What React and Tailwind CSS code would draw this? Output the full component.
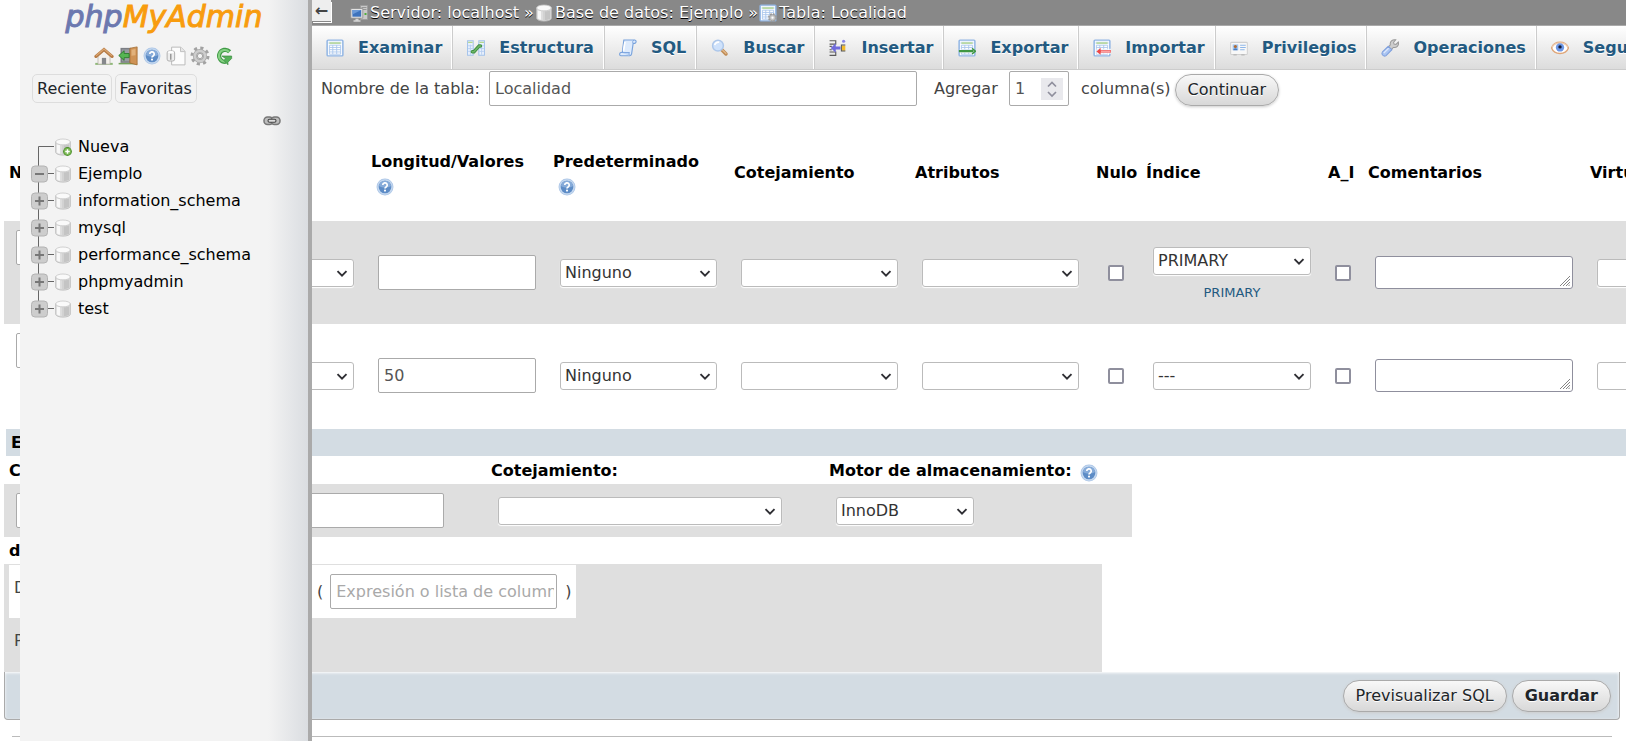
import React from "react";

const svgBase = "block shrink-0";

function Icon({ children, className = "size-[18px]" }) {
  return (
    <svg viewBox="0 0 16 16" className={`${svgBase} ${className}`} aria-hidden="true">
      {children}
    </svg>
  );
}

function HomeIcon() {
  return (
    <Icon className="size-5">
      <path d="M1 13.5h14v1.6H1z" fill="#8fb878" />
      <path d="M3.2 8 8 3.8 12.8 8v6.5H3.2z" fill="#f4f1ec" stroke="#b5b0a8" strokeWidth=".6" />
      <path d="M6.3 9.5h3.4v5.2H6.3z" fill="#85878b" />
      <path d="M1.5 8.4 8 2.8l6.5 5.6" fill="none" stroke="#b87c45" strokeWidth="2.4" strokeLinecap="round" />
      <path d="M1.6 7.9 8 2.4l6.4 5.5" fill="none" stroke="#dba772" strokeWidth="1" />
    </Icon>
  );
}

function LogoutIcon() {
  return (
    <Icon className="size-5">
      <path d="M2 1.5h8.5v12H2z" fill="#7b7e84" />
      <path d="M3.2 2.7h6v9.6h-6z" fill="#989ca1" />
      <path d="M.5 13.5h14.8v1.2H.5z" fill="#74a25a" />
      <path d="M9.5 1.8 15.3.7v14.4L9.5 13.6z" fill="#cf9356" stroke="#a0692f" strokeWidth=".6" />
      <path d="m10.8 3 3.2-.6v5l-3.2.3z" fill="#e2b27c" />
      <path d="M.6 7.6 4.9 3.8V6h4v3.3h-4v2.2z" fill="#55b552" stroke="#2c7a2d" strokeWidth=".7" />
    </Icon>
  );
}

function HelpIcon() {
  return (
    <Icon>
      <circle cx="8" cy="8" r="7.5" fill="#a9c4e6" />
      <circle cx="8" cy="8" r="6.9" fill="#c5d8ef" />
      <circle cx="8" cy="8" r="5.6" fill="#5d8cc6" />
      <path d="M2.6 7a5.5 5.5 0 0 1 10.8 0c-3 1.8-7.5 1.8-10.8 0z" fill="#86abd9" />
      <path d="M6 6.300a2 2 0 1 1 3 1.700c-.7.4-1 .7-1 1.400" fill="none" stroke="#fff" strokeWidth="1.5" />
      <circle cx="8" cy="11.2" r=".95" fill="#fff" />
    </Icon>
  );
}

function DocsIcon() {
  return (
    <Icon className="size-5">
      <path d="M4.5.9h7.300l3.400 3.400v10.800H4.500z" fill="#fcfcfc" stroke="#bcbcbc" strokeWidth=".8" />
      <path d="M11.600 1v3.500h3.500" fill="#e6e6e6" stroke="#bcbcbc" strokeWidth=".7" />
      <rect x=".9" y="4" width="6" height="8" rx="1.5" fill="#ededed" stroke="#b0b0b0" strokeWidth=".8" />
      <path d="M3.800 6.200v4.800" stroke="#9a9a9a" strokeWidth="1.2" />
      <ellipse cx="3.9" cy="4.9" rx="2.5" ry=".9" fill="#fff" />
    </Icon>
  );
}

function GearIcon() {
  return (
    <Icon className="size-5">
      <circle cx="8" cy="8" r="6.4" fill="none" stroke="#a2a2a2" strokeWidth="2.4" strokeDasharray="2.5 2.53" />
      <circle cx="8" cy="8" r="4" fill="none" stroke="#a8a8a8" strokeWidth="3.4" />
      <circle cx="8" cy="8" r="4.1" fill="none" stroke="#cdcdcd" strokeWidth="2" />
      <circle cx="8" cy="8" r="2.1" fill="#f3f3f3" stroke="#999" strokeWidth=".7" />
    </Icon>
  );
}

function ReloadIcon() {
  return (
    <Icon>
      <path d="M13 4.2A5.400 5.400 0 1 0 9.500 13.300" fill="none" stroke="#3f9a45" strokeWidth="3.8" />
      <path d="M12.600 4.400A5.200 5.200 0 1 0 9 13" fill="none" stroke="#85d083" strokeWidth="1.8" />
      <path d="M6.200 8h8.600v2.200l-3.300 3.300v2.300L7.900 12l1.600-1.600z" fill="#55b158" stroke="#35883b" strokeWidth=".6" />
    </Icon>
  );
}

function LinkIcon() {
  return (
    <svg viewBox="0 0 18 12" className="block h-3 w-[18px]" aria-hidden="true">
      <rect x="1" y="2" width="9" height="7.5" rx="3.5" fill="#bdbdbd" stroke="#777" strokeWidth="1.5" />
      <rect x="8" y="2" width="9" height="7.5" rx="3.5" fill="#bdbdbd" stroke="#777" strokeWidth="1.5" />
      <rect x="5" y="4.3" width="8" height="3" rx="1.5" fill="#ddd" stroke="#444" strokeWidth="1.1" />
    </svg>
  );
}

function Barrel() {
  return (
    <>
      <path d="M1.500 3.300v9.400c0 1.300 2.900 2.500 6.500 2.500s6.500-1.200 6.500-2.500V3.300z" fill="#dedede" stroke="#bcbcbc" strokeWidth=".8" />
      <path d="M2.500 5.500v7.200c.7.800 1.700 1.200 2.800 1.400V6.400z" fill="#f8f8f8" />
      <path d="M8.500 6.500v7.900c2.200 0 4.200-.5 5-1.300V5.500c-1 .6-2.800 1-5 1z" fill="#c4c4c4" />
      <path d="M7 6.500v7.800h1.500V6.500z" fill="#d2d2d2" />
      <ellipse cx="8" cy="3.5" rx="6.5" ry="2.6" fill="#fafafa" stroke="#c6c6c6" strokeWidth=".7" />
    </>
  );
}

function DatabaseIcon({ added = false }) {
  return (
    <Icon>
      <Barrel />
      {added && (
        <>
          <circle cx="12" cy="12" r="3.9" fill="#4b8f2b" />
          <circle cx="12" cy="12" r="3.1" fill="#7cb955" />
          <path d="M12 10v4M10 12h4" stroke="#fff" strokeWidth="1.3" />
        </>
      )}
    </Icon>
  );
}

function ServerIcon() {
  return (
    <svg viewBox="0 0 18 18" className={`${svgBase} mt-[3px] size-[18px]`} aria-hidden="true">
      <path d="M10.500.5h7v14h-7z" fill="#c9c9c9" stroke="#9b9b9b" strokeWidth=".8" />
      <path d="M11.500 2.500h5M11.500 4.500h5" stroke="#888" strokeWidth=".8" />
      <path d="M14.500 9h2" stroke="#4fae3c" strokeWidth="2" />
      <path d="M.8 3.500h12v9.700H.8z" fill="#e3e3e3" stroke="#8c8c8c" strokeWidth=".8" />
      <path d="M2.400 5h8.800v6.700H2.400z" fill="#3e73bd" />
      <path d="M2.400 5h8.800l-8.800 4.500z" fill="#6b9ad8" />
      <path d="M5.500 13.800h3v1.500h2v1.500h-7v-1.500h2z" fill="#d5d5d5" />
    </svg>
  );
}

function SheetShape() {
  return (
    <>
      <rect x="1" y="1" width="14" height="14" rx=".8" fill="#fff" stroke="#8fb4e4" strokeWidth="1.3" />
      <path d="M2.200 2.300h11.600v2.200H2.200z" fill="#d4e4f8" />
      <path d="M3 3.600h10" stroke="#b3d78e" strokeWidth="1.3" />
      <path d="M3 5.500h10v8H3zM3 7.500h10M3 9.500h10M3 11.500h10M6 5.500v8M9.500 5.500v8" fill="none" stroke="#a9c6ec" strokeWidth=".8" />
    </>
  );
}

function BrowseIcon() {
  return (
    <Icon>
      <SheetShape />
    </Icon>
  );
}

function TableGearIcon() {
  return (
    <Icon>
      <SheetShape />
      <circle cx="12" cy="12.2" r="3" fill="#ccc" stroke="#999" strokeWidth="2" strokeDasharray="1.5 .85" />
      <circle cx="12" cy="12.2" r="2.7" fill="#c6c6c6" stroke="#999" strokeWidth=".6" />
      <circle cx="12" cy="12.2" r="1" fill="#fff" />
    </Icon>
  );
}

function StructureIcon() {
  return (
    <Icon>
      <path d="M.5 1.500h5v13h-5zM10.500 1.500h5v13h-5z" fill="#eaf2fd" stroke="#a3c2ea" strokeWidth=".9" />
      <path d="M1 3h4M11 3h4" stroke="#b3d78e" strokeWidth="1.2" />
      <path d="M1 6h4M1 8.500h4M1 11h4M11 6h4M11 8.500h4M11 11h4M3 5v9M13 5v9" stroke="#b5cef0" strokeWidth=".8" />
      <path d="M4.700 11.300h1.500l4.600-5.100h1.200" fill="none" stroke="#3f9143" strokeWidth="3" strokeLinecap="round" />
      <path d="M4.700 11.300h1.500l4.600-5.100h1.200" fill="none" stroke="#6fb567" strokeWidth="1.3" strokeLinecap="round" />
    </Icon>
  );
}

function SqlIcon() {
  return (
    <Icon>
      <path d="M4.300.9h9.500c1.700 0 2 2.300.3 3h-1.500l-1.400 9.300c-.2 1-.8 1.700-1.800 1.700H1.700C.2 14.900.1 12.400 1.700 12h1.200z" fill="#deebfc" stroke="#78a2dc" strokeWidth="1" />
      <path d="M1.700 12h7.600c-.6 1.100-.3 2.300.4 2.800" fill="#bcd5f6" stroke="#78a2dc" strokeWidth=".8" />
      <path d="M12.600 3.900c-1-.8-.4-2.800 1-2.900" fill="none" stroke="#78a2dc" strokeWidth=".8" />
      <path d="m5.300 2.500-1.300 8" stroke="#fff" strokeWidth="1.5" />
    </Icon>
  );
}

function SearchIcon() {
  return (
    <Icon>
      <path d="m9.800 9.800 3.500 3.500" stroke="#c08d57" strokeWidth="3.2" strokeLinecap="round" />
      <path d="m10.300 9.800 3 3" stroke="#e7bf92" strokeWidth="1" strokeLinecap="round" />
      <circle cx="6.2" cy="5.9" r="4.8" fill="#cfe2fb" stroke="#adc7ea" strokeWidth="1.3" />
      <path d="M3.300 5.500a3.300 3.300 0 0 1 4-2.600" fill="none" stroke="#fff" strokeWidth="1.5" />
    </Icon>
  );
}

function InsertIcon() {
  return (
    <Icon>
      <path d="M.5 1.500h5.500v3H.5M.5 11.500h5.500v3H.5M.5 6.500H2.500M.5 9.500H2.500" fill="none" stroke="#5a5a5a" strokeWidth="1" />
      <path d="M1.500 8 6 3.800v2.900h4.200v2.600H6v2.900z" fill="#6f6bdb" />
      <path d="M11.300 5.800h3.200v4.600h-3.200z" fill="#f3ba2a" />
      <path d="M14.500 5.300h-3.500v5.400h3.500" fill="none" stroke="#555" strokeWidth=".9" />
      <circle cx="13" cy="2" r="1.4" fill="#8a86e6" />
    </Icon>
  );
}

function ExportIcon() {
  return (
    <Icon>
      <SheetShape />
      <path d="M1.500 9.200h13v3.200h-13z" fill="#fff" opacity=".7" />
      <path d="M.8 10.800h13" stroke="#3f9742" strokeWidth="2" />
      <path d="m12.500 8.300 3 2.500-3 2.500" fill="none" stroke="#3f9742" strokeWidth="1.3" />
    </Icon>
  );
}

function ImportIcon() {
  return (
    <Icon>
      <SheetShape />
      <path d="M3 8.700h13v4.500H3z" fill="#fff" opacity=".7" />
      <path d="M5.500 11H16" stroke="#f25c5c" strokeWidth="2.2" />
      <path d="M7 11h8.500" stroke="#ffc0c0" strokeWidth=".7" />
      <path d="M3 11l3.800-3v6z" fill="#ee4848" />
    </Icon>
  );
}

function PrivilegesIcon() {
  return (
    <Icon>
      <rect x=".6" y="3" width="14.8" height="10.8" rx=".8" fill="#f8f8f8" stroke="#d0d0d0" strokeWidth=".9" />
      <path d="M2.300 4.800h5v5.200h-5z" fill="#a3c7ef" />
      <circle cx="4.8" cy="6.7" r="1.4" fill="#b06b33" />
      <path d="M2.900 10c0-2.500 3.800-2.500 3.800 0z" fill="#4c7cc0" />
      <path d="M9 5.500h5M9 7.500h5M9 9.500h4" stroke="#8eb6e8" strokeWidth="1" />
      <path d="M3 14h3M10 14h3" stroke="#bcbcbc" strokeWidth="1.2" />
    </Icon>
  );
}

function WrenchIcon() {
  return (
    <Icon>
      <path d="M8.300 5.300c-.7-2.700 1.800-5.200 4.800-4.600l-1.900 2.200.4 1.600 1.700.3 2.100-2.100c.9 3.200-1.700 5.400-4.500 4.800L9.300 9.400 6.600 7z" fill="#cdcdcd" stroke="#9a9a9a" strokeWidth=".9" />
      <path d="m6.500 6.500 3.200 3-5.200 5.200c-2 1.500-4.700-1.100-3.200-3.200z" fill="#a9c4f2" stroke="#7f9fdc" strokeWidth=".9" />
      <path d="m6.800 8.200-4.300 4.300" stroke="#dbe7fc" strokeWidth="1.2" />
    </Icon>
  );
}

function EyeIcon() {
  return (
    <Icon>
      <path d="M.5 8C3 1.300 13 1.300 15.500 8 13 14.500 3 14.500.5 8z" fill="#fff" stroke="#dfa67a" strokeWidth="1.3" />
      <path d="M1 7C4 2.200 12 2.200 15 7" fill="none" stroke="#eccbb0" strokeWidth="1.2" />
      <circle cx="8" cy="7.5" r="3.7" fill="#6d97e6" />
      <circle cx="8" cy="7" r="1.5" fill="#161b33" />
    </Icon>
  );
}

function Select({ label, value = "", className = "w-full" }) {
  return (
    <div className={`relative ${className}`}>
      <select
        aria-label={label}
        defaultValue={value}
        className="block h-7 w-full appearance-none rounded-[3px] border border-[#bbb] bg-white pl-1 pr-6 text-base leading-6 text-[#333] shadow-[0_1px_1px_#fff]"
      >
        <option value={value}>{value}</option>
      </select>
      <svg viewBox="0 0 12 8" className="pointer-events-none absolute right-[6px] top-[11px] h-2 w-3" aria-hidden="true">
        <path d="m1.500 1.200 4.500 4.500 4.500-4.500" fill="none" stroke="#2e2e33" strokeWidth="1.9" />
      </svg>
    </div>
  );
}

const inputClass =
  "block h-[35px] rounded-[2px] border border-[#aaa] bg-white px-[5px] text-base text-[#555] placeholder:text-[#a9a9a9]";

function Checkbox({ label }) {
  return (
    <input
      type="checkbox"
      aria-label={label}
      className="mx-auto block size-4 appearance-none rounded-[2px] border-2 border-[#8f8f9d] bg-white"
    />
  );
}

function CommentBox({ label }) {
  return (
    <div className="relative">
      <textarea
        aria-label={label}
        className="block h-[33px] w-full resize-none overflow-hidden rounded-[3px] border border-[#8f8f9d] bg-white px-1"
      />
      <svg viewBox="0 0 10 10" className="pointer-events-none absolute bottom-[3px] right-[3px] size-[10px]" aria-hidden="true">
        <path d="M0 10 10 0M3 10l7-7M6 10l4-4M8.500 10 10 8.500" stroke="#777" strokeWidth=".9" />
      </svg>
    </div>
  );
}

const tabs = [
  ["Examinar", BrowseIcon],
  ["Estructura", StructureIcon],
  ["SQL", SqlIcon],
  ["Buscar", SearchIcon],
  ["Insertar", InsertIcon],
  ["Exportar", ExportIcon],
  ["Importar", ImportIcon],
  ["Privilegios", PrivilegesIcon],
  ["Operaciones", WrenchIcon],
  ["Seguimiento", EyeIcon],
];

const crumbs = [
  ["Servidor: localhost", ServerIcon],
  ["Base de datos: Ejemplo", DatabaseIcon],
  ["Tabla: Localidad", TableGearIcon],
];

const databases = ["Nueva", "Ejemplo", "information_schema", "mysql", "performance_schema", "phpmyadmin", "test"];

const rows = [
  { name: "idLocalidad", length: "", index: "PRIMARY", shade: "bg-[#dfdfdf]" },
  { name: "Nombre", length: "50", index: "---", shade: "bg-white" },
];

function TreeBranch({ position, open, last }) {
  return (
    <svg viewBox="0 0 24 27" className="block h-[27px] w-6 shrink-0" aria-hidden="true">
      <path
        d={position === 0 ? "M8.500 27V13.500H26" : last ? "M8.500 0V13.500H26" : "M8.500 0V27M8.500 13.500H26"}
        fill="none"
        stroke="#666"
      />
      {position > 0 && (
        <>
          <rect x="1.5" y="6" width="16" height="16" rx="3.5" fill="#cdcdcd" stroke="#b3b3b3" />
          <path d={open ? "M5 14h9" : "M5 14h9M9.500 9.500v9"} stroke="#777" strokeWidth="2" />
        </>
      )}
    </svg>
  );
}

function Sidebar() {
  const tools = [
    ["Página principal", HomeIcon],
    ["Salir", LogoutIcon],
    ["Documentación", HelpIcon],
    ["Documentación de MariaDB", DocsIcon],
    ["Configuración", GearIcon],
    ["Recargar", ReloadIcon],
  ];
  return (
    <aside className="absolute inset-y-0 left-5 z-10 w-[292px] overflow-hidden border-r-4 border-[#aaa] bg-[linear-gradient(to_left,#dadde1_0px,#f3f3f3_40px)]">
      <a href="#inicio" className="block text-center text-[30px] italic leading-[34px]">
        <span className="text-[#6c78af] [-webkit-text-stroke:1px_#6c78af]">php</span>
        <span className="text-[#f89c0e] [-webkit-text-stroke:1px_#f89c0e]">MyAdmin</span>
      </a>
      <nav className="mt-3 flex h-5 justify-center gap-1">
        {tools.map(([label, ToolIcon]) => (
          <a key={label} href="#herramienta" aria-label={label} className="flex size-5 items-center justify-center">
            <ToolIcon />
          </a>
        ))}
      </nav>
      <div className="ml-3 mt-2 flex gap-[3px]">
        {["Reciente", "Favoritas"].map((text) => (
          <button key={text} type="button" className="h-[29px] rounded-[5px] border border-[#ddd] px-1 text-base leading-6 text-[#212529]">
            {text}
          </button>
        ))}
      </div>
      <a href="#enlace" aria-label="Enlazar con el panel principal" className="ml-[243px] mt-3 block w-[18px]">
        <LinkIcon />
      </a>
      <ul className="ml-[10px] mt-[6px]">
        {databases.map((name, i) => (
          <li key={name} className="flex h-[27px] items-center">
            <TreeBranch position={i} open={i === 1} last={i === databases.length - 1} />
            <DatabaseIcon added={i === 0} />
            <a href="#base" className="ml-[6px] text-base leading-6 text-black">
              {name}
            </a>
          </li>
        ))}
      </ul>
    </aside>
  );
}

const pill =
  "h-8 rounded-full border border-[#aaa] bg-linear-to-b from-[#f8f8f8] to-[#d8d8d8] px-3 text-base leading-6 text-[#212529] shadow-[0_1px_3px_#ccc] [text-shadow:0_1px_0_#fff]";

const th = "px-[5px] text-left font-bold text-black";
const td = "px-3";

export default function App() {
  return (
    <div className="relative min-h-screen overflow-hidden bg-white font-['DejaVu_Sans',sans-serif] text-base leading-6 text-[#444]">
      <Sidebar />
      <header className="ml-[312px]">
        <div className="flex h-[26px] items-start border-b border-[#aaa] bg-[#888]">
          <button
            type="button"
            aria-label="Ocultar panel"
            className="h-[21px] w-[19px] bg-[#eee] text-center text-base font-bold leading-5 text-[#444] shadow-[0_1px_0_#888,1px_2px_0_#fff]"
          >
            ←
          </button>
          <nav className="ml-[19px] flex h-[25px] items-center text-white [text-shadow:0_1px_0_#000]">
            {crumbs.map(([text, CrumbIcon], i) => (
              <a key={text} href="#ruta" className="mr-px flex items-center gap-[2px] whitespace-nowrap">
                <CrumbIcon />
                <span>
                  {text}
                  {i < crumbs.length - 1 && " »"}
                </span>
              </a>
            ))}
          </nav>
        </div>
        <nav className="flex h-[44px] overflow-hidden border-b border-[#ccc] bg-linear-to-b from-white to-[#dcdcdc]">
          {tabs.map(([text, TabIcon], i) => (
            <a
              key={text}
              href="#pestana"
              className={`flex shrink-0 items-center border-r border-r-white pl-[14px] pr-[9px] font-bold text-[#235a81] [text-shadow:0_1px_0_#fff] ${i > 0 ? "border-l border-l-[#ccc]" : ""}`}
            >
              <TabIcon />
              <span className="ml-[14px]">{text}</span>
            </a>
          ))}
        </nav>
      </header>

      <main>
        <form className="ml-[321px] mt-px flex h-[35px] items-center whitespace-nowrap">
          <label htmlFor="tabla" className="w-[168px]">
            Nombre de la tabla:
          </label>
          <input id="tabla" type="text" defaultValue="Localidad" className={`${inputClass} w-[428px]`} />
          <label htmlFor="cantidad" className="ml-[17px] w-[75px]">
            Agregar
          </label>
          <div className="relative">
            <input
              id="cantidad"
              type="number"
              defaultValue="1"
              className={`${inputClass} w-[60px] [appearance:textfield] [&::-webkit-inner-spin-button]:appearance-none`}
            />
            <svg viewBox="0 0 22 22" className="pointer-events-none absolute right-[6px] top-[7px] size-[22px]" aria-hidden="true">
              <path d="M0 0h22v22H0z" fill="#e9e9ed" />
              <path d="m7 8.500 4-4 4 4M7 14l4 4 4-4" fill="none" stroke="#8f8f9d" strokeWidth="1.7" />
            </svg>
          </div>
          <span className="ml-3">columna(s)</span>
          <button type="button" className={`${pill} ml-1 mt-[3px]`}>
            Continuar
          </button>
        </form>

        <table className="ml-1 mt-[18px] w-[1765px] table-fixed border-collapse">
          <colgroup>
            <col className="w-[181px]" />
            <col className="w-[181px]" />
            <col className="w-[182px]" />
            <col className="w-[181px]" />
            <col className="w-[181px]" />
            <col className="w-[181px]" />
            <col className="w-[50px]" />
            <col className="w-[182px]" />
            <col className="w-[40px]" />
            <col className="w-[222px]" />
            <col />
          </colgroup>
          <thead>
            <tr className="h-[97px]">
              <th className={th}>Nombre</th>
              <th className={th}>Tipo</th>
              {["Longitud/Valores", "Predeterminado"].map((text) => (
                <th key={text} className={th}>
                  {text}
                  <a href="#ayuda" aria-label={`Ayuda: ${text}`} className="block w-[28px] pl-[5px] pt-1">
                    <HelpIcon />
                  </a>
                </th>
              ))}
              {["Cotejamiento", "Atributos", "Nulo", "Índice"].map((text) => (
                <th key={text} className={th}>
                  {text}
                </th>
              ))}
              <th className={th}>
                <abbr title="AUTO_INCREMENT" className="no-underline">
                  A_I
                </abbr>
              </th>
              <th className={th}>Comentarios</th>
              <th className={th}>Virtualidad</th>
            </tr>
          </thead>
          <tbody>
            {rows.map((row) => (
              <tr key={row.name} className={`h-[103px] ${row.shade}`}>
                <td className={`${td} pt-[9px] align-top`}>
                  <input type="text" aria-label="Nombre" defaultValue={row.name} className={`${inputClass} w-full`} />
                </td>
                <td className={td}>
                  <Select label="Tipo" value="VARCHAR" />
                </td>
                <td className={td}>
                  <input type="text" aria-label="Longitud/Valores" defaultValue={row.length} className={`${inputClass} w-full`} />
                </td>
                <td className={td}>
                  <Select label="Predeterminado" value="Ninguno" />
                </td>
                <td className={td}>
                  <Select label="Cotejamiento" />
                </td>
                <td className={td}>
                  <Select label="Atributos" />
                </td>
                <td>
                  <Checkbox label="Nulo" />
                </td>
                <td className={td}>
                  <Select label="Índice" value={row.index} />
                  {row.index === "PRIMARY" && (
                    <a href="#indice" className="mt-3 block text-center text-[13px] leading-3 text-[#235a81]">
                      PRIMARY
                    </a>
                  )}
                </td>
                <td>
                  <Checkbox label="A_I" />
                </td>
                <td className={td}>
                  <CommentBox label="Comentarios" />
                </td>
                <td className={td}>
                  <Select label="Virtualidad" />
                </td>
              </tr>
            ))}
          </tbody>
        </table>

        <h2 className="ml-[6px] mt-[2px] h-[27px] bg-[#d3dce3] pl-[5px] font-bold leading-[27px] text-black">Estructura</h2>

        <table className="ml-1 w-[1128px] table-fixed border-collapse">
          <colgroup>
            <col className="w-[482px]" />
            <col className="w-[338px]" />
            <col />
          </colgroup>
          <thead>
            <tr className="h-7">
              <th className={`${th} pt-[2px]`}>
                <label htmlFor="comentario-tabla">Comentarios de la tabla:</label>
              </th>
              <th className={`${th} pt-[2px]`}>Cotejamiento:</th>
              <th className={`${th} pt-[2px]`}>
                <span className="flex items-center gap-2">
                  Motor de almacenamiento:
                  <a href="#ayuda" aria-label="Ayuda: motor de almacenamiento" className="pt-1">
                    <HelpIcon />
                  </a>
                </span>
              </th>
            </tr>
          </thead>
          <tbody>
            <tr className="h-[53px] bg-[#dfdfdf]">
              <td className={td}>
                <input id="comentario-tabla" type="text" className={`${inputClass} w-[428px]`} />
              </td>
              <td className={td}>
                <Select label="Cotejamiento" className="w-[284px]" />
              </td>
              <td className={td}>
                <Select label="Motor de almacenamiento" value="InnoDB" className="w-[138px]" />
              </td>
            </tr>
          </tbody>
        </table>

        <h3 className="ml-[9px] h-[27px] font-bold leading-[27px] text-black">definición de la PARTICIÓN:</h3>

        <section className="ml-1 h-[108px] w-[1098px] bg-[#dfdfdf] pl-[5px] pt-px">
          <div className="flex h-[53px] w-[567px] items-center bg-white">
            <span className="w-[308px] pb-2 pl-[5px]">Dividir por:</span>
            <span>(</span>
            <input
              type="text"
              aria-label="Expresión o lista de columnas"
              placeholder="Expresión o lista de columnas"
              className={`${inputClass} ml-[7px] w-[227px] pr-[2px]`}
            />
            <span className="ml-2">)</span>
          </div>
          <div className="flex h-[54px] items-center">
            <label htmlFor="particiones" className="pb-2 pl-[5px]">
              Particiones:
            </label>
            <input id="particiones" type="number" className={`${inputClass} ml-5 w-20`} />
          </div>
        </section>

        <footer className="ml-1 mr-[6px] flex h-12 items-center justify-end gap-[5px] rounded-b-[4px] border border-t-0 border-[#aaa] bg-[#d3dce3] pr-2 pt-px shadow-[inset_0_1px_3px_#fff]">
          <button type="button" className={pill}>
            Previsualizar SQL
          </button>
          <button type="button" className={`${pill} font-bold`}>
            Guardar
          </button>
        </footer>
        <hr className="ml-3 mr-[14px] mt-4 border-[#bbb]" />
      </main>
    </div>
  );
}
